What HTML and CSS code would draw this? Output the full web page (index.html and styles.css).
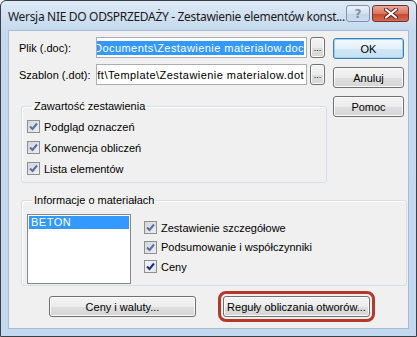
FILE: index.html
```html
<!DOCTYPE html>
<html lang="pl">
<head>
    <meta charset="UTF-8">
    <meta name="viewport" content="width=device-width, initial-scale=1.0">
    <title>Zestawienie elementów konstrukcji</title>
    <link rel="stylesheet" href="styles.css">
</head>
<body>
    <div class="window">
        <div class="titlebar">
            <span class="title">Wersja NIE DO ODSPRZEDAŻY - Zestawienie elementów konst...</span>
            <div class="caption-buttons">
                <button class="cap cap-help">?</button>
                <button class="cap cap-close">
                    <svg width="14" height="11" viewBox="0 0 14 11">
                        <path d="M2 1.5 L12 9.5 M12 1.5 L2 9.5" stroke="#5a2018" stroke-width="4" stroke-linecap="round"/>
                        <path d="M2 1.5 L12 9.5 M12 1.5 L2 9.5" stroke="#fff" stroke-width="2.2" stroke-linecap="round"/>
                    </svg>
                </button>
            </div>
        </div>

        <div class="client">
            <div class="top">
                <div class="left">
                    <div class="file-row">
                        <span class="file-label">Plik (.doc):</span>
                        <div class="input">
                            <span class="sel">Documents\Zestawienie materialow.doc</span>
                        </div>
                        <button class="btn dots">...</button>
                    </div>
                    <div class="file-row">
                        <span class="file-label">Szablon (.dot):</span>
                        <div class="input">
                            <span>oft\Template\Zestawienie materialow.dot</span>
                        </div>
                        <button class="btn dots">...</button>
                    </div>

                    <fieldset class="group group-content">
                        <legend>Zawartość zestawienia</legend>
                        <label class="check"><span class="cb grey"><svg width="9" height="9" viewBox="0 0 9 9"><path d="M1 4.5 L3.5 7 L8 1.5" fill="none" stroke="#5b6f98" stroke-width="2"/></svg></span>Podgląd oznaczeń</label>
                        <label class="check"><span class="cb grey"><svg width="9" height="9" viewBox="0 0 9 9"><path d="M1 4.5 L3.5 7 L8 1.5" fill="none" stroke="#5b6f98" stroke-width="2"/></svg></span>Konwencja obliczeń</label>
                        <label class="check"><span class="cb grey"><svg width="9" height="9" viewBox="0 0 9 9"><path d="M1 4.5 L3.5 7 L8 1.5" fill="none" stroke="#5b6f98" stroke-width="2"/></svg></span>Lista elementów</label>
                    </fieldset>
                </div>

                <div class="side">
                    <button class="btn side-btn default">OK</button>
                    <button class="btn side-btn">Anuluj</button>
                    <button class="btn side-btn">Pomoc</button>
                </div>
            </div>

            <fieldset class="group group-materials">
                <legend>Informacje o materiałach</legend>
                <div class="materials">
                    <div class="listbox">
                        <div class="list-item selected">BETON</div>
                    </div>
                    <div class="mat-checks">
                        <label class="check"><span class="cb grey"><svg width="9" height="9" viewBox="0 0 9 9"><path d="M1 4.5 L3.5 7 L8 1.5" fill="none" stroke="#5b6f98" stroke-width="2"/></svg></span>Zestawienie szczegółowe</label>
                        <label class="check"><span class="cb grey"><svg width="9" height="9" viewBox="0 0 9 9"><path d="M1 4.5 L3.5 7 L8 1.5" fill="none" stroke="#5b6f98" stroke-width="2"/></svg></span>Podsumowanie i współczynniki</label>
                        <label class="check"><span class="cb"><svg width="9" height="9" viewBox="0 0 9 9"><path d="M1 4.5 L3.5 7 L8 1.5" fill="none" stroke="#1c2f80" stroke-width="2"/></svg></span>Ceny</label>
                    </div>
                </div>
            </fieldset>

            <div class="bottom">
                <button class="btn wide">Ceny i waluty...</button>
                <button class="btn wide marked">Reguły obliczania otworów...</button>
            </div>
        </div>
    </div>
</body>
</html>
```

FILE: styles.css
```css
/* Window frame */
body {
    margin: 0;
    background: #fff;
}

.window {
    width: 417px;
    height: 337px;
    box-sizing: border-box;
    border: 1px solid #3b4047;
    border-radius: 6px 6px 0 0;
    background: linear-gradient(#dde9f6 0px, #c5d9ef 30px, #c3d9f0 100%);
    display: flex;
    flex-direction: column;
}

.titlebar {
    height: 29px;
    display: flex;
    justify-content: space-between;
    align-items: flex-start;
    padding-left: 7px;
    padding-right: 7px;
}

.title {
    font-family: "Noto Sans", sans-serif;
    font-size: 12px;
    letter-spacing: -0.32px;
    line-height: 16px;
    padding-top: 8px;
    color: #1a1a1a;
    white-space: nowrap;
}

.caption-buttons {
    display: flex;
    flex-shrink: 0;
    gap: 2px;
    padding-top: 4px;
}

.cap {
    height: 17px;
    padding: 0;
    border-radius: 3px;
    display: flex;
    align-items: center;
    justify-content: center;
}

.cap-help {
    width: 24px;
    border: 1px solid #7f93ad;
    background: linear-gradient(#eef3fa, #d3e0f0 50%, #c3d3e9 51%, #cfdcee);
    font-family: "DejaVu Sans", sans-serif;
    font-size: 12px;
    font-weight: bold;
    color: #8290a4;
}

.cap-close {
    width: 37px;
    border: 1px solid #7b3128;
    background: linear-gradient(#e9a89b, #d87560 50%, #c74630 51%, #d46a4e);
}

/* Client area */
.client {
    margin: 0 7px 7px 7px;
    flex: 1;
    background: #f0f0f0;
    border: 1px solid #a9bcd6;
    padding: 6px 0 0 10px;
    font-family: "Liberation Sans", Arial, sans-serif;
    font-size: 11px;
    color: #000;
}

.top {
    display: flex;
}

.left {
    width: 308px;
}

.file-row {
    display: flex;
    align-items: center;
    height: 21px;
    margin-bottom: 6px;
}

.file-label {
    width: 77px;
    flex-shrink: 0;
}

.input {
    width: 207px;
    height: 19px;
    border: 1px solid #abadb3;
    background: #fff;
    display: flex;
    justify-content: flex-end;
    align-items: center;
    overflow: hidden;
    white-space: nowrap;
    padding-right: 2px;
    letter-spacing: 0.45px;
}

.input .sel {
    background: #3399ff;
    color: #fff;
    line-height: 14px;
}

.btn {
    font-family: "Liberation Sans", Arial, sans-serif;
    font-size: 11px;
    color: #000;
    border: 1px solid #707070;
    border-radius: 3px;
    background: linear-gradient(#f4f4f4, #ececec 50%, #dfdfdf 51%, #d6d6d6);
    box-shadow: inset 0 0 0 1px #fbfbfb;
    padding: 0;
}

.dots {
    width: 15px;
    height: 21px;
    margin-left: 3px;
    font-size: 9px;
}

/* Group boxes */
.group {
    border: 1px solid #d5dfe5;
    border-radius: 3px;
    margin: 0;
    box-shadow: inset 1px 1px 0 #fff;
}

.group legend {
    padding: 0 2px;
    margin-left: 5px;
    line-height: 13px;
}

.group-content {
    margin: 15px 0 0 2px;
    width: 306px;
    box-sizing: border-box;
    height: 83px;
    padding: 3px 0 0 5px;
}

.check {
    display: flex;
    align-items: center;
    height: 21px;
    white-space: nowrap;
}

.cb {
    width: 11px;
    height: 11px;
    border: 1px solid #8e8f8f;
    background: linear-gradient(135deg, #f4f4f4, #e3e7ee);
    margin-right: 4px;
    display: flex;
    align-items: center;
    justify-content: center;
}

.cb.grey {
    background: linear-gradient(135deg, #d2d6de, #eceef2);
}

.side {
    margin-left: 6px;
    padding-top: 1px;
    display: flex;
    flex-direction: column;
    gap: 8px;
}

.side-btn {
    width: 71px;
    height: 21px;
}

.side-btn.default {
    border-color: #3c7fb1;
    background: linear-gradient(#f2f9fd, #e3f1fb 50%, #cfe6f6 51%, #c8e1f3);
    box-shadow: inset 0 0 0 1px #9fd0f0;
}

.group-materials {
    margin: 11px 0 0 2px;
    width: 386px;
    box-sizing: border-box;
    height: 92px;
    padding: 7px 0 0 5px;
}

.materials {
    display: flex;
}

.listbox {
    width: 101px;
    height: 67px;
    border: 1px solid #828790;
    background: #fff;
    padding: 1px 0 0 1px;
}

.list-item {
    line-height: 13px;
    padding-left: 2px;
    margin-right: 1px;
    letter-spacing: 0.5px;
}

.list-item.selected {
    background: #3399ff;
    color: #fff;
}

.mat-checks {
    margin-left: 13px;
    margin-top: 4px;
}

.mat-checks .check {
    height: 19.5px;
}

.bottom {
    display: flex;
    gap: 27px;
    margin-top: 10px;
    padding-left: 30px;
}

.wide {
    width: 147px;
    height: 21px;
}

.marked {
    outline: 3px solid #b5392b;
    outline-offset: 2px;
}
```
